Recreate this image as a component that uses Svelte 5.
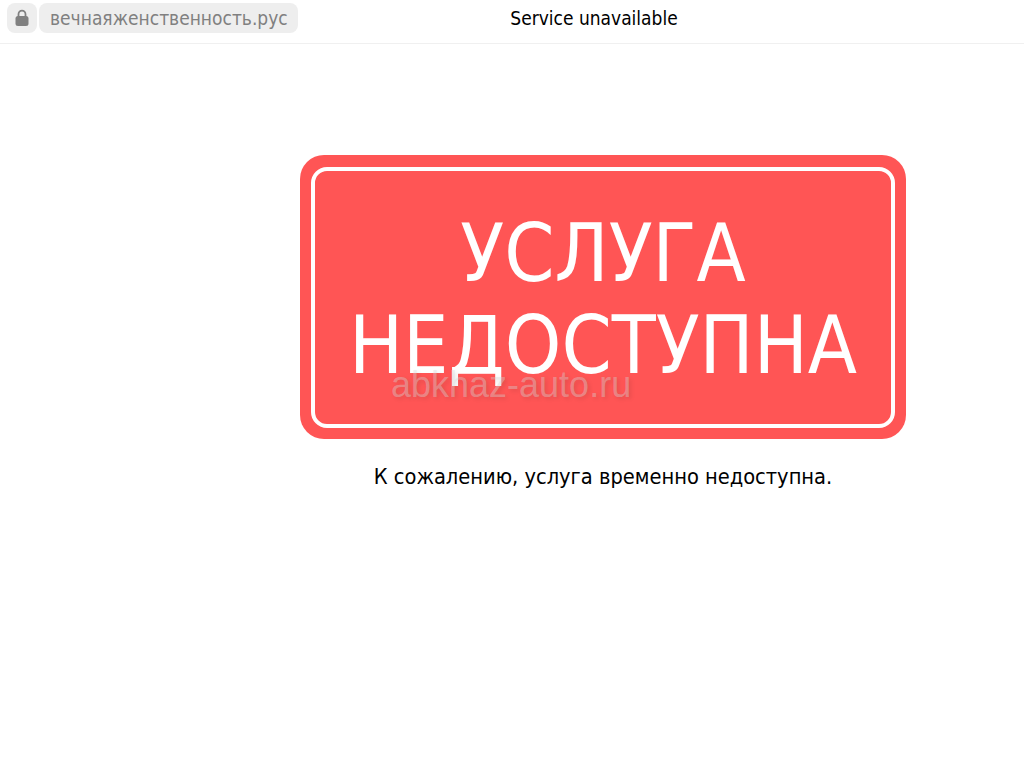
<script>
  const host = 'вечнаяженственность.рус';
</script>

<div class="page">
  <header class="bar">
    <div class="lock">
      <svg width="14" height="18" viewBox="0 0 14 18" aria-hidden="true">
        <path d="M3.5 8V5.2a3.5 3.5 0 0 1 7 0V8" fill="none" stroke="#808080" stroke-width="1.8"/>
        <rect x="0.5" y="7" width="13" height="10" rx="2.5" fill="#808080"/>
      </svg>
    </div>
    <div class="host">{host}</div>
    <div class="title">Service unavailable</div>
  </header>

  <main class="content">
    <div class="card">
      <div class="inner">
        <div class="big">УСЛУГА<br />НЕДОСТУПНА</div>
      </div>
      <span class="mark">abkhaz-auto.ru</span>
    </div>
    <p class="msg">К сожалению, услуга временно недоступна.</p>
  </main>
</div>

<style>
  :global(body) { margin: 0; background: #fff; }
  .page { width: 1024px; height: 768px; overflow: hidden; font-family: "DejaVu Sans Condensed", "DejaVu Sans", sans-serif; font-stretch: condensed; }
  .bar { position: relative; display: flex; align-items: flex-start; gap: 2px; padding: 3px 0 0 7px; box-sizing: border-box; border-bottom: 1px solid #f0f0f0; height: 44px; }
  .lock { width: 30px; height: 30px; border-radius: 8px; background: #eeeeee; display: flex; align-items: center; justify-content: center; }
  .host { height: 30px; padding: 0 11px; border-radius: 8px; background: #eeeeee; color: #808080; font-size: 19px; line-height: 30px; width: 237px; white-space: nowrap; }
  .title { position: absolute; left: 0; right: 0; top: 5px; padding-left: 164px; text-align: center; font-size: 19px; line-height: 26px; color: #000; }
  .content { padding: 111px 118px 0 300px; }
  .card { position: relative; box-sizing: border-box; width: 606px; height: 284px; padding: 12px; border-radius: 24px; background: #ff5555; }
  .inner { box-sizing: border-box; height: 261px; margin: 0 -1px; border: 4px solid #fff; border-radius: 16px; display: flex; align-items: center; justify-content: center; padding-top: 5px; }
  .big { color: #fff; font-size: 80px; line-height: 92px; text-align: center; }
  .mark { position: absolute; left: 91px; top: 209px; font-family: "Liberation Sans", sans-serif; font-size: 36px; line-height: 42px; color: rgba(215,215,215,0.4); text-shadow: 2px 2px 4px rgba(0,0,0,0.1); }
  .msg { margin: 23px 0 0; text-align: center; font-size: 21.65px; line-height: 30px; color: #000; }
</style>
